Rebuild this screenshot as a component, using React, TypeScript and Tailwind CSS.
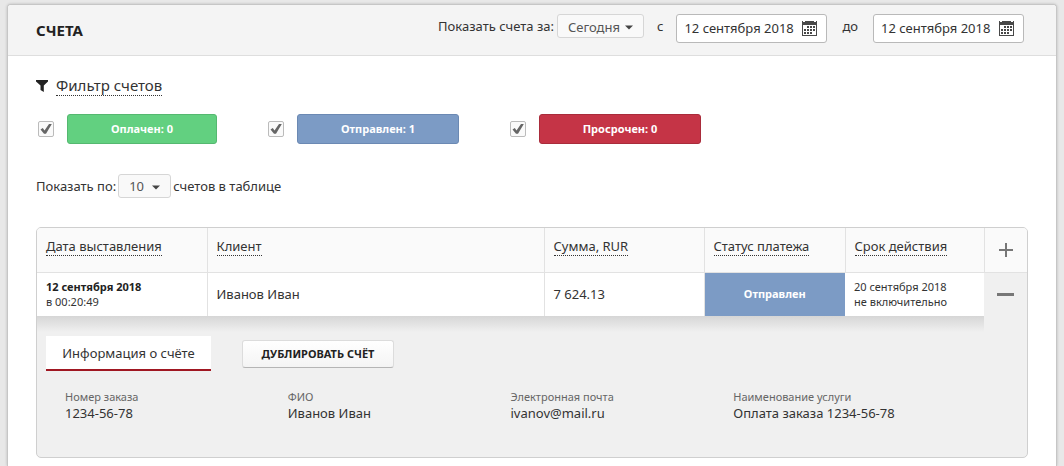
import React, { useState } from 'react';

interface StatusFilter {
  id: string;
  label: string;
  className: string;
}

const statusFilters: StatusFilter[] = [
  { id: 'paid', label: 'Оплачен: 0', className: 'w-[150px] bg-[#62d080] border-[#55b870]' },
  { id: 'sent', label: 'Отправлен: 1', className: 'w-[162px] bg-[#7c9bc5] border-[#6b89b3]' },
  { id: 'overdue', label: 'Просрочен: 0', className: 'w-[162px] bg-[#c53446] border-[#a92c3b]' },
];

const columns = [
  { title: 'Дата выставления', width: 'w-[170px]' },
  { title: 'Клиент', width: '' },
  { title: 'Сумма, RUR', width: 'w-[160px]' },
  { title: 'Статус платежа', width: 'w-[141px]' },
  { title: 'Срок действия', width: 'w-[139px]' },
];

const details = [
  { label: 'Номер заказа', value: '1234-56-78' },
  { label: 'ФИО', value: 'Иванов Иван' },
  { label: 'Электронная почта', value: 'ivanov@mail.ru' },
  { label: 'Наименование услуги', value: 'Оплата заказа 1234-56-78' },
];

const CalendarIcon = () => (
  <svg width="15" height="15" viewBox="0 0 15 15" fill="#484848" shapeRendering="crispEdges">
    <path d="M0 0h1v1h2V0h9v1h2V0h1v15H0zM1 4v10h13V4z" fillRule="evenodd" />
    <path d="M5 5h2v2H5zM8 5h2v2H8zM11 5h2v2h-2zM2 8h2v2H2zM5 8h2v2H5zM8 8h2v2H8zM11 8h2v2h-2zM2 11h2v2H2zM5 11h2v2H5zM8 11h2v2H8z" />
  </svg>
);

const FunnelIcon = () => (
  <svg width="12" height="12" viewBox="0 0 12 12" fill="#222">
    <path d="M0 0h12v1.500L7.800 5.500V12L4.500 10V5.500L0 1.500z" />
  </svg>
);

interface DropdownProps {
  id: string;
  options: string[];
  className: string;
}

const Dropdown: React.FC<DropdownProps> = ({ id, options, className }) => (
  <div className="relative">
    <select
      id={id}
      className={`block h-6 appearance-none rounded-[3px] border border-[#d6d6d6] bg-[#f9f9f9] pl-2.5 text-[#555] ${className}`}
    >
      {options.map((option) => (
        <option key={option}>{option}</option>
      ))}
    </select>
    <svg width="8" height="5" viewBox="0 0 8 5" className="pointer-events-none absolute right-[11px] top-[11px]">
      <path d="M0 0.500h8L4 4.500z" fill="#444" />
    </svg>
  </div>
);

const DateField: React.FC<{ id: string }> = ({ id }) => (
  <div className="flex h-[29px] w-[151px] items-center rounded-[3px] border border-[#b9b9b9] bg-white pl-[7px] pr-[9px]">
    <input id={id} type="text" defaultValue="12 сентября 2018" className="w-0 flex-1 bg-transparent pb-0.5 outline-none" />
    <button type="button" aria-label="Календарь">
      <CalendarIcon />
    </button>
  </div>
);

const App: React.FC = () => {
  const [expanded, setExpanded] = useState(true);

  return (
    <div className="min-h-screen bg-[#e8e8e8] px-[7px] pt-1 font-['Noto_Sans',sans-serif] text-[13px] leading-4 text-[#333]">
      <div className="flex min-h-[462px] flex-col rounded-t-[4px] border border-b-0 border-[#c6c6c6] bg-white shadow-[0_0_3px_rgba(0,0,0,0.2)]">
        {/* Header */}
        <header className="flex items-center justify-between rounded-t-[3px] border-b border-[#dedede] bg-[#f4f4f4] pl-7 pr-8">
          <h1 className="text-[15px] font-bold text-[#222]">СЧЕТА</h1>
          <div className="flex items-start pb-3 pt-[9px] leading-6">
            <label htmlFor="period" className="mr-[3px]">Показать счета за:</label>
            <Dropdown id="period" options={['Сегодня', 'Вчера', 'Неделя']} className="w-[87px]" />
            <label htmlFor="date-from" className="mx-[13px]">с</label>
            <DateField id="date-from" />
            <label htmlFor="date-to" className="mx-[15px]">до</label>
            <DateField id="date-to" />
          </div>
        </header>

        <main className="px-7 pb-2 pt-[19px]">
          {/* Filter */}
          <button type="button" className="flex items-center gap-2 text-[15px] leading-5">
            <FunnelIcon />
            <span className="border-b border-dotted border-[#333]">Фильтр счетов</span>
          </button>
          <div className="mt-[18px] flex flex-wrap gap-[51px] pl-0.5">
            {statusFilters.map((filter) => (
              <div key={filter.id} className="flex items-center gap-[13px]">
                <div className="relative h-4 w-4">
                  <input
                    id={filter.id}
                    type="checkbox"
                    defaultChecked
                    className="peer block h-4 w-4 appearance-none rounded-[2px] border border-[#bbb] bg-[#fafafa]"
                  />
                  <svg
                    width="12"
                    height="12"
                    viewBox="0 0 12 12"
                    className="pointer-events-none absolute left-0.5 top-0.5 hidden peer-checked:block"
                  >
                    <path d="M0.500 6.500L2.800 5L4.500 7.500L9 1L11.800 1L6 10.800H4z" fill="#666" />
                  </svg>
                </div>
                <label
                  htmlFor={filter.id}
                  className={`flex h-[30px] items-center justify-center rounded-[3px] border text-[11px] font-bold text-white ${filter.className}`}
                >
                  {filter.label}
                </label>
              </div>
            ))}
          </div>

          <div className="mt-[30px] flex items-center gap-[2px]">
            <label htmlFor="page-size">Показать по:</label>
            <Dropdown id="page-size" options={['10', '25', '50']} className="w-[53px]" />
            <span>счетов в таблице</span>
          </div>

          {/* Invoices table */}
          <div className="mt-[29px] overflow-hidden rounded-[5px] border border-[#cfcfcf] bg-[#f0f0f0]">
            <table className="w-full table-fixed border-collapse text-left">
              <thead>
                <tr className="h-11 border-b border-[#e2e2e2] bg-[#fafafa]">
                  {columns.map((column) => (
                    <th key={column.title} className={`border-r border-[#e2e2e2] pb-1.5 pl-[9px] font-normal ${column.width}`}>
                      <button type="button" className="border-b border-dotted border-[#333] leading-[18px]">
                        {column.title}
                      </button>
                    </th>
                  ))}
                  <th className="w-[43px]">
                    <button type="button" aria-label="Развернуть все" className="mx-auto block">
                      <svg width="14" height="14" viewBox="0 0 14 14" fill="#777">
                        <path d="M6 0h2v6h6v2H8v6H6V8H0V6h6z" />
                      </svg>
                    </button>
                  </th>
                </tr>
              </thead>
              <tbody>
                <tr className="h-11 bg-white">
                  <td className="border-r border-[#e2e2e2] pl-[9px] text-[11px] leading-[15px]">
                    <b className="block text-[#222]">12 сентября 2018</b>в 00:20:49
                  </td>
                  <td className="border-r border-[#e2e2e2] pl-[9px]">Иванов Иван</td>
                  <td className="border-r border-[#e2e2e2] pl-[9px]">7 624.13</td>
                  <td className="bg-[#7c9bc5] text-center text-[11px] font-bold text-white">Отправлен</td>
                  <td className="pl-[9px] text-[11px] leading-[15px]">
                    20 сентября 2018
                    <br />
                    не включительно
                  </td>
                  <td className="bg-[#f0f0f0]">
                    <button
                      type="button"
                      aria-label="Свернуть"
                      onClick={() => setExpanded(!expanded)}
                      className="mx-auto block"
                    >
                      <svg width="17" height="3" viewBox="0 0 17 3" fill="#777">
                        <path d="M0 0h17v3H0z" />
                      </svg>
                    </button>
                  </td>
                </tr>
                {expanded && (
                  <tr>
                    <td colSpan={5} className="p-0 align-top">
                      <div className="h-4 bg-linear-to-b from-[#d6d6d6] to-[#f0f0f0]" />
                      <div className="flex items-center gap-[31px] pl-[9px] pt-1">
                        <button
                          type="button"
                          className="h-[35px] w-[165px] border-b-2 border-[#a01722] bg-white"
                        >
                          Информация о счёте
                        </button>
                        <button
                          type="button"
                          className="h-7 w-[152px] rounded-[3px] border border-[#dcdcdc] border-b-[#b5b5b5] bg-linear-to-b from-white to-[#f4f4f4] text-[11px] font-bold text-[#222]"
                        >
                          ДУБЛИРОВАТЬ СЧЁТ
                        </button>
                      </div>
                      <dl className="grid grid-cols-4 px-7 pb-9 pt-[18px]">
                        {details.map((item) => (
                          <div key={item.label}>
                            <dt className="text-[11px] text-[#666]">{item.label}</dt>
                            <dd>{item.value}</dd>
                          </div>
                        ))}
                      </dl>
                    </td>
                    <td />
                  </tr>
                )}
              </tbody>
            </table>
          </div>
        </main>
      </div>
    </div>
  );
};

export default App;
